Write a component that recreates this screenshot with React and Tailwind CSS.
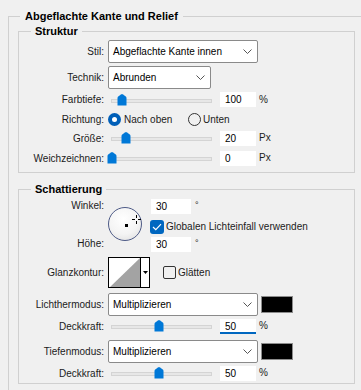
import React from "react";

const Chevron = () => (
  <svg width="9" height="5" viewBox="0 0 9 5" className="shrink-0">
    <path d="M0.5 0.5 L4.5 4.5 L8.5 0.5" fill="none" stroke="#555" strokeWidth="1" />
  </svg>
);

const Select = ({ value, w }) => (
  <div
    className={`${w} h-[23px] bg-white border border-[#8a8a8a] rounded-[2px] flex items-center justify-between pl-[4px] pr-[5px] text-[10px] text-black`}
  >
    <span>{value}</span>
    <Chevron />
  </div>
);

const Thumb = ({ left }) => (
  <svg
    width="10"
    height="12"
    viewBox="0 0 10 12"
    className="absolute top-[4px]"
    style={{ left }}
  >
    <path d="M0.5 4 Q0.5 3 1.5 2.2 L4 0.4 Q5 -0.2 6 0.4 L8.5 2.2 Q9.5 3 9.5 4 V11.5 H0.5 Z" fill="#0078d7" />
  </svg>
);

const Slider = ({ thumb }) => (
  <div className="relative w-[108px] h-[20px] shrink-0">
    <div className="absolute left-[3px] right-[4px] top-[9px] h-[4px] bg-[#e7e7e7] border border-[#d4d4d4]" />
    <Thumb left={thumb} />
  </div>
);

const NumBox = ({ value, focused, w = "w-[36px]" }) => (
  <div
    className={`${w} h-[15px] bg-white pl-[5px] text-[10px] leading-[15px] text-black box-border ${
      focused ? "border-b-2 border-[#0067c0]" : ""
    }`}
  >
    {value}
  </div>
);

const Label = ({ children }) => (
  <div className="w-[85px] shrink-0 text-right text-[#1b1b1b]">{children}</div>
);

const SliderRow = ({ label, thumb, value, unit, h = "h-[20px]", focused }) => (
  <div className={`flex items-center ${h}`}>
    <Label>{label}</Label>
    <div className="ml-[4px] flex items-center">
      <Slider thumb={thumb} />
      <div className="ml-[4px]">
        <NumBox value={value} focused={focused} />
      </div>
      <span className="ml-[3px] self-start mt-[2px] text-[10px] text-[#1b1b1b]">{unit}</span>
    </div>
  </div>
);

const Radio = ({ checked }) =>
  checked ? (
    <div className="w-[13px] h-[13px] rounded-full bg-[#005fb8] flex items-center justify-center shrink-0">
      <div className="w-[5px] h-[5px] rounded-full bg-white" />
    </div>
  ) : (
    <div className="w-[13px] h-[13px] rounded-full border border-[#333] shrink-0" />
  );

const CheckBox = ({ checked }) =>
  checked ? (
    <div className="w-[14px] h-[14px] rounded-[3px] bg-[#0067c0] flex items-center justify-center shrink-0">
      <svg width="10" height="8" viewBox="0 0 10 8">
        <path d="M1 4 L3.8 6.6 L9 1.2" fill="none" stroke="#fff" strokeWidth="1.2" />
      </svg>
    </div>
  ) : (
    <div className="w-[13px] h-[13px] rounded-[2px] border border-[#333] shrink-0" />
  );

const Swatch = () => (
  <div className="ml-[3px] w-[32px] h-[17px] bg-black border border-[#8c8c8c]" />
);

export default function App() {
  return (
    <div className="w-[361px] h-[390px] overflow-hidden bg-[#f0f0f0] font-['Liberation_Sans',Arial,sans-serif] text-[10px] text-[#1b1b1b]">
      <fieldset className="ml-[8px] mt-[9px] w-[400px] border-0 border-l border-t border-[#d0d0d0] pl-[9px] pb-[20px]">
        <legend className="ml-[2px] px-[5px] text-[11px] leading-[14px] font-bold text-black">
          Abgeflachte Kante und Relief
        </legend>

        {/* Struktur */}
        <fieldset className="w-[337px] border border-[#d0d0d0] pt-[1px] pb-[4px]">
          <legend className="ml-[12px] px-[4px] text-[11px] leading-[16px] font-bold text-black">
            Struktur
          </legend>
          <div className="flex items-center h-[23px]">
            <Label>Stil:</Label>
            <div className="ml-[4px]">
              <Select value="Abgeflachte Kante innen" w="w-[150px]" />
            </div>
          </div>
          <div className="flex items-center h-[23px] mt-[3px]">
            <Label>Technik:</Label>
            <div className="ml-[4px]">
              <Select value="Abrunden" w="w-[103px]" />
            </div>
          </div>
          <SliderRow label="Farbtiefe:" thumb={9} value="100" unit="%" h="h-[21px]" />
          <div className="flex items-center h-[18px]">
            <Label>Richtung:</Label>
            <div className="ml-[4px] flex items-center">
              <div className="w-[80px] flex items-center shrink-0">
                <Radio checked />
                <span className="ml-[3px] text-[#1b1b1b]">Nach oben</span>
              </div>
              <div className="flex items-center">
                <Radio />
                <span className="ml-[2px] text-[#1b1b1b]">Unten</span>
              </div>
            </div>
          </div>
          <SliderRow label="Größe:" thumb={13} value="20" unit="Px" />
          <SliderRow label="Weichzeichnen:" thumb={-1} value="0" unit="Px" />
        </fieldset>

        {/* Schattierung */}
        <fieldset className="mt-[8px] w-[337px] border border-[#d0d0d0] pt-[2px]">
          <legend className="ml-[12px] px-[4px] text-[11px] leading-[16px] font-bold text-black">
            Schattierung
          </legend>
          <div className="flex">
            <div className="w-[85px] shrink-0 flex flex-col items-end">
              <div className="h-[15px] leading-[13px]">Winkel:</div>
              <div className="mt-[22px] h-[15px] leading-[15px]">Höhe:</div>
            </div>
            <div className="relative ml-[4px] mt-[8px] w-[34px] h-[34px] rounded-full border-[1.5px] border-[#4d5a86] bg-[radial-gradient(circle_at_45%_35%,#ffffff_0%,#f4f4f4_55%,#dadada_100%)] shrink-0">
              <div className="absolute left-[16px] top-[16px] w-[3px] h-[3px] bg-black" />
              <svg width="9" height="9" viewBox="0 0 9 9" className="absolute left-[23px] top-[7px]">
                <path d="M4.5 0 V3 M4.5 6 V9 M0 4.5 H3 M6 4.5 H9" stroke="#000" strokeWidth="1" />
              </svg>
            </div>
            <div className="ml-[9px] flex flex-col">
              <div className="flex">
                <NumBox value="30" w="w-[40px]" />
                <span className="ml-[4px] text-[9px] leading-[9px] mt-[2px]">°</span>
              </div>
              <div className="flex items-center mt-[5px] ml-[-1px]">
                <CheckBox checked />
                <span className="ml-[2px] text-[#1b1b1b]">Globalen Lichteinfall verwenden</span>
              </div>
              <div className="flex mt-[3px]">
                <NumBox value="30" w="w-[40px]" />
                <span className="ml-[4px] text-[9px] leading-[9px] mt-[2px]">°</span>
              </div>
            </div>
          </div>

          <div className="flex items-center mt-[5px]">
            <Label>Glanzkontur:</Label>
            <div className="ml-[4px] w-[42px] h-[31px] border border-black bg-white flex">
              <svg width="31" height="29" viewBox="0 0 31 29" className="shrink-0">
                <polygon points="1,29 31,0 31,29" fill="#a3a3a3" />
              </svg>
              <div className="w-[1px] h-full bg-black" />
              <div className="flex-1 flex items-center justify-center">
                <svg width="5" height="3" viewBox="0 0 5 3">
                  <polygon points="0,0 5,0 2.5,3" fill="#000" />
                </svg>
              </div>
            </div>
            <div className="ml-[13px]">
              <CheckBox />
            </div>
            <span className="ml-[2px] text-[#1b1b1b]">Glätten</span>
          </div>

          <div className="flex items-center mt-[5px] h-[23px]">
            <Label>Lichthermodus:</Label>
            <div className="ml-[4px] flex items-center">
              <Select value="Multiplizieren" w="w-[150px]" />
              <Swatch />
            </div>
          </div>
          <SliderRow label="Deckkraft:" thumb={46} value="50" unit="%" focused />
          <div className="flex items-center mt-[4px] h-[23px]">
            <Label>Tiefenmodus:</Label>
            <div className="ml-[4px] flex items-center">
              <Select value="Multiplizieren" w="w-[150px]" />
              <Swatch />
            </div>
          </div>
          <SliderRow label="Deckkraft:" thumb={46} value="50" unit="%" />
        </fieldset>
      </fieldset>
    </div>
  );
}
